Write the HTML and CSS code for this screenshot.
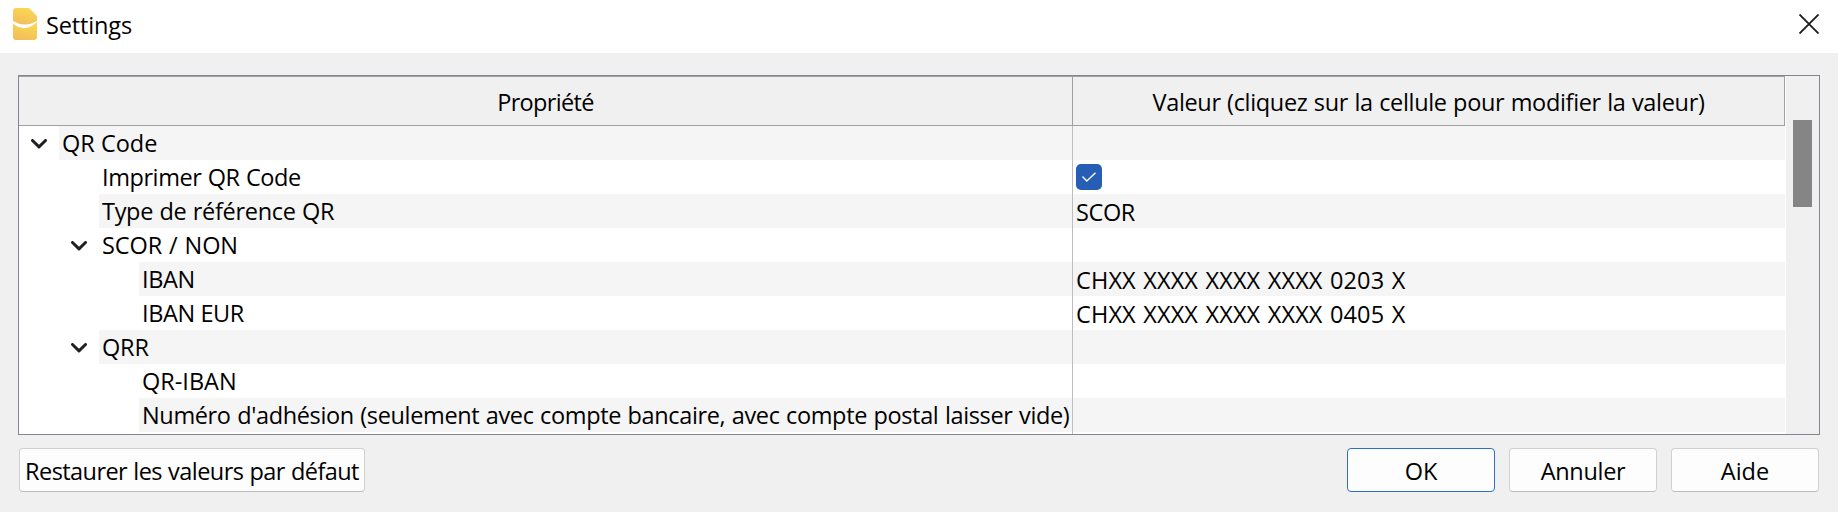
FILE: index.html
```html
<!DOCTYPE html>
<html lang="fr">
<head>
<meta charset="utf-8">
<title>Settings</title>
<link rel="stylesheet" href="styles.css">
</head>
<body>
<div class="dialog">
  <header class="titlebar">
    <svg class="logo" width="24" height="32" viewBox="0 0 24 32">
      <defs><linearGradient id="gold" x1="0.7" y1="0" x2="0.3" y2="1"><stop offset="0" stop-color="#fad951"/><stop offset="1" stop-color="#f3bd5c"/></linearGradient></defs>
      <path fill="url(#gold)" d="M3 0H16L24 8V13Q12 20 0 13V3Q0 0 3 0Z"/>
      <path fill="url(#gold)" d="M0 15.5Q12 25.5 24 14V29Q24 32 21 32H3Q0 32 0 29Z"/>
    </svg>
    <h1 class="title"><span class="t t-settings">Settings</span></h1>
    <svg class="close" width="20" height="20" viewBox="0 0 20 20"><path d="M0.5 0.5L19.5 19.5M19.5 0.5L0.5 19.5"/></svg>
  </header>
  <main class="frame">
    <div class="table">
      <div class="row head">
        <div class="name"><span class="t t-prop">Propriété</span></div>
        <div class="value"><span class="t t-valeur">Valeur (cliquez sur la cellule pour modifier la valeur)</span></div>
      </div>
      <div class="row alt">
        <div class="gutter g1"><svg class="chevron" width="16" height="10" viewBox="0 0 16 10"><path d="M1.5 1.5L8 7.8L14.5 1.5"/></svg></div>
        <div class="name"><span class="t t-qrcode">QR Code</span></div><div class="value"></div>
      </div>
      <div class="row">
        <div class="gutter g2"></div>
        <div class="name"><span class="t t-imprimer">Imprimer QR Code</span></div>
        <div class="value"><span class="check"><svg width="14" height="10" viewBox="0 0 14 10"><path d="M0.5 4.5L4.8 9L13.5 0.7"/></svg></span></div>
      </div>
      <div class="row alt">
        <div class="gutter g2"></div>
        <div class="name"><span class="t t-type">Type de référence QR</span></div><div class="value"><span class="t t-scor">SCOR</span></div>
      </div>
      <div class="row">
        <div class="gutter g2"><svg class="chevron" width="16" height="10" viewBox="0 0 16 10"><path d="M1.5 1.5L8 7.8L14.5 1.5"/></svg></div>
        <div class="name"><span class="t t-scornon">SCOR / NON</span></div><div class="value"></div>
      </div>
      <div class="row alt">
        <div class="gutter g3"></div>
        <div class="name"><span class="t t-iban">IBAN</span></div><div class="value"><span class="t t-ch">CHXX XXXX XXXX XXXX 0203 X</span></div>
      </div>
      <div class="row">
        <div class="gutter g3"></div>
        <div class="name"><span class="t t-iban">IBAN EUR</span></div><div class="value"><span class="t t-ch">CHXX XXXX XXXX XXXX 0405 X</span></div>
      </div>
      <div class="row alt">
        <div class="gutter g2"><svg class="chevron" width="16" height="10" viewBox="0 0 16 10"><path d="M1.5 1.5L8 7.8L14.5 1.5"/></svg></div>
        <div class="name"><span class="t t-qrr">QRR</span></div><div class="value"></div>
      </div>
      <div class="row">
        <div class="gutter g3"></div>
        <div class="name"><span class="t t-qriban">QR-IBAN</span></div><div class="value"></div>
      </div>
      <div class="row alt">
        <div class="gutter g3"></div>
        <div class="name"><span class="t t-numero">Numéro d'adhésion (seulement avec compte bancaire, avec compte postal laisser vide)</span></div><div class="value"></div>
      </div>
      <div class="row rest"><div class="name"></div><div class="value"></div></div>
    </div>
    <div class="scrollbar"><div class="thumb"></div></div>
  </main>
  <footer class="buttons">
    <button class="btn restore"><span class="t t-restore">Restaurer les valeurs par défaut</span></button>
    <button class="btn ok"><span class="t t-ok">OK</span></button>
    <button class="btn"><span class="t t-annuler">Annuler</span></button>
    <button class="btn"><span class="t t-aide">Aide</span></button>
  </footer>
</div>
</body>
</html>
```
FILE: styles.css
```css
* { box-sizing: border-box; }
body { margin: 0; background: #f0f0f0; color: #000; font: 23.5px/34px "Open Sans", "Noto Sans", sans-serif; }
.dialog { width: 1838px; height: 512px; overflow: hidden; display: flex; flex-direction: column; }
.t { white-space: nowrap; }
.t-settings { letter-spacing: -0.15px; }
.t-prop { letter-spacing: -0.65px; }
.t-valeur { letter-spacing: -0.33px; word-spacing: 0.6px; }
.t-imprimer { letter-spacing: -0.42px; word-spacing: 0.6px; }
.t-type { letter-spacing: -0.31px; word-spacing: 0.6px; }
.t-scor { letter-spacing: -0.4px; }
.t-scornon { letter-spacing: -0.1px; word-spacing: 1px; }
.t-iban { letter-spacing: -0.4px; }
.t-ch { letter-spacing: 0.13px; word-spacing: 1.2px; }
.t-qrr { letter-spacing: -0.2px; }
.t-numero { letter-spacing: -0.36px; word-spacing: 0.75px; }
.t-restore { letter-spacing: -0.56px; word-spacing: 0.6px; }
.t-annuler { letter-spacing: -0.3px; }
.titlebar { height: 53px; flex: none; background: #fff; display: flex; align-items: flex-start; padding: 8px 19px 0 13px; }
.logo { flex: none; }
.title { margin: 0 0 0 9px; font: inherit; flex: 1; }
.close { margin: 6px 0 0; flex: none; }
.close path { stroke: #1a1a1a; stroke-width: 1.8; fill: none; }
.frame { margin: 22px 18px 0; height: 360px; flex: none; border: 1px solid #828790; background: #fff; display: flex; }
.table { width: 1766px; flex: none; display: flex; flex-direction: column; }
.row { display: flex; height: 34px; flex: none; }
.row .name { flex: 1; min-width: 0; padding-left: 3px; white-space: nowrap; }
.row .value { width: 713px; flex: none; border-left: 1px solid #bdbdbd; padding-left: 3px; display: flex; line-height: 36px; }
.alt .name, .alt .value { background: #f5f5f5; }
.head { height: 50px; background: #f0f0f0; border: 1px solid #a0a0a0; border-left: 0; line-height: 50px; }
.head .name { padding: 0; text-align: center; }
.row.head .value { border-left-color: #a0a0a0; padding: 0; justify-content: center; width: 712px; line-height: 50px; }
.row.rest { height: 2px; }
.gutter { flex: none; display: flex; justify-content: flex-end; padding: 13px 12px 0 0; }
.g1 { width: 40px; }
.g2 { width: 80px; }
.g3 { width: 120px; }
.chevron path { fill: none; stroke: #202020; stroke-width: 3; stroke-linecap: round; stroke-linejoin: round; }
.check { width: 26px; height: 26px; margin: 4px 0 0; border-radius: 5px; background: #275eb5; display: grid; place-items: center; line-height: 0; }
.check path { fill: none; stroke: #fff; stroke-width: 1.3; }
.scrollbar { width: 33px; margin-left: 1px; background: #f0f0f0; padding: 44px 0 0 7px; }
.thumb { width: 19px; height: 87px; background: #858585; }
.buttons { display: flex; gap: 14px; padding: 13px 19px 0; }
.btn { width: 148px; height: 44px; padding: 2px 0 0; border: 1px solid #d0d0d0; border-bottom-color: #bbb; border-radius: 4px; background: #fdfdfd; color: #000; font: inherit; line-height: 40px; }
.btn.restore { width: 346px; margin-right: auto; }
.btn.ok { border-color: #2b6fca; }
```
